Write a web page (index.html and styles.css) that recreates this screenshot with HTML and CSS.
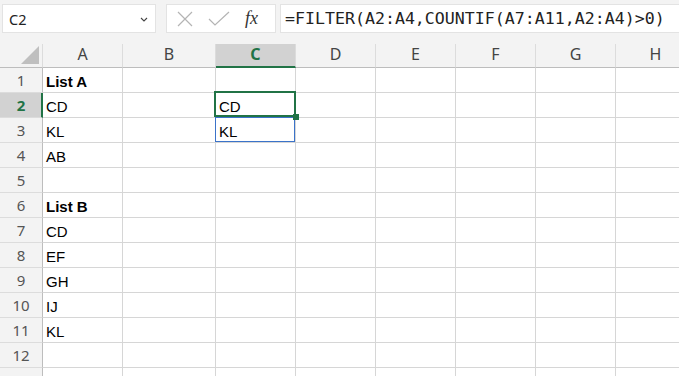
FILE: index.html
```html
<!DOCTYPE html>
<html lang="en">
<head>
    <meta charset="UTF-8">
    <title>FILTER COUNTIF</title>
    <link rel="stylesheet" href="styles.css">
</head>
<body>
    <div class="topbar">
        <div class="namebox">
            <span>C2</span>
            <svg class="chev" width="8" height="5" viewBox="0 0 8 5"><path d="M1 1 L4 4 L7 1" fill="none" stroke="#444" stroke-width="1.1"/></svg>
        </div>
        <div class="fbtns">
            <svg width="18" height="18" viewBox="0 0 18 18"><path d="M2 2 L16 16 M16 2 L2 16" stroke="#b4b4b4" stroke-width="1.2" fill="none"/></svg>
            <svg width="22" height="16" viewBox="0 0 22 16"><path d="M1 8 L7 14 L21 1" stroke="#b4b4b4" stroke-width="1.2" fill="none"/></svg>
            <span class="fx">fx</span>
        </div>
        <div class="fbar">=FILTER(A2:A4,COUNTIF(A7:A11,A2:A4)&gt;0)</div>
    </div>

    <div class="sheet">
        <div class="row hdr">
            <div class="corner"><span class="tri"></span></div>
            <div class="ch w80">A</div><div class="ch w93">B</div><div class="ch w80 sel">C</div><div class="ch w80">D</div>
            <div class="ch w80">E</div><div class="ch w80">F</div><div class="ch w80">G</div><div class="ch w80">H</div>
        </div>
        <div class="row">
            <div class="rh">1</div><div class="c w80 b">List A</div><div class="c w93"></div><div class="c w80"></div><div class="c w80"></div>
            <div class="c w80"></div><div class="c w80"></div><div class="c w80"></div><div class="c w80"></div>
        </div>
        <div class="row">
            <div class="rh sel">2</div><div class="c w80">CD</div><div class="c w93"></div><div class="c w80 active">CD<span class="handle"></span></div><div class="c w80"></div>
            <div class="c w80"></div><div class="c w80"></div><div class="c w80"></div><div class="c w80"></div>
        </div>
        <div class="row">
            <div class="rh">3</div><div class="c w80">KL</div><div class="c w93"></div><div class="c w80 spill">KL</div><div class="c w80"></div>
            <div class="c w80"></div><div class="c w80"></div><div class="c w80"></div><div class="c w80"></div>
        </div>
        <div class="row">
            <div class="rh">4</div><div class="c w80">AB</div><div class="c w93"></div><div class="c w80"></div><div class="c w80"></div>
            <div class="c w80"></div><div class="c w80"></div><div class="c w80"></div><div class="c w80"></div>
        </div>
        <div class="row">
            <div class="rh">5</div><div class="c w80"></div><div class="c w93"></div><div class="c w80"></div><div class="c w80"></div>
            <div class="c w80"></div><div class="c w80"></div><div class="c w80"></div><div class="c w80"></div>
        </div>
        <div class="row">
            <div class="rh">6</div><div class="c w80 b">List B</div><div class="c w93"></div><div class="c w80"></div><div class="c w80"></div>
            <div class="c w80"></div><div class="c w80"></div><div class="c w80"></div><div class="c w80"></div>
        </div>
        <div class="row">
            <div class="rh">7</div><div class="c w80">CD</div><div class="c w93"></div><div class="c w80"></div><div class="c w80"></div>
            <div class="c w80"></div><div class="c w80"></div><div class="c w80"></div><div class="c w80"></div>
        </div>
        <div class="row">
            <div class="rh">8</div><div class="c w80">EF</div><div class="c w93"></div><div class="c w80"></div><div class="c w80"></div>
            <div class="c w80"></div><div class="c w80"></div><div class="c w80"></div><div class="c w80"></div>
        </div>
        <div class="row">
            <div class="rh">9</div><div class="c w80">GH</div><div class="c w93"></div><div class="c w80"></div><div class="c w80"></div>
            <div class="c w80"></div><div class="c w80"></div><div class="c w80"></div><div class="c w80"></div>
        </div>
        <div class="row">
            <div class="rh">10</div><div class="c w80">IJ</div><div class="c w93"></div><div class="c w80"></div><div class="c w80"></div>
            <div class="c w80"></div><div class="c w80"></div><div class="c w80"></div><div class="c w80"></div>
        </div>
        <div class="row">
            <div class="rh">11</div><div class="c w80">KL</div><div class="c w93"></div><div class="c w80"></div><div class="c w80"></div>
            <div class="c w80"></div><div class="c w80"></div><div class="c w80"></div><div class="c w80"></div>
        </div>
        <div class="row">
            <div class="rh">12</div><div class="c w80"></div><div class="c w93"></div><div class="c w80"></div><div class="c w80"></div>
            <div class="c w80"></div><div class="c w80"></div><div class="c w80"></div><div class="c w80"></div>
        </div>
        <div class="row">
            <div class="rh">13</div><div class="c w80"></div><div class="c w93"></div><div class="c w80"></div><div class="c w80"></div>
            <div class="c w80"></div><div class="c w80"></div><div class="c w80"></div><div class="c w80"></div>
        </div>
    </div>
</body>
</html>
```

FILE: styles.css
```css
* {
    box-sizing: border-box;
}
body {
    margin: 0;
    background: #fff;
    overflow: hidden;
    width: 679px;
    height: 376px;
    font-family: "Liberation Sans", Arial, sans-serif;
}

/* formula bar */
.topbar {
    display: flex;
    height: 44px;
    padding: 4px 0 0 2px;
    background: #f3f3f3;
}
.namebox {
    display: flex;
    align-items: center;
    justify-content: space-between;
    width: 154px;
    height: 29px;
    padding: 0 7px 0 6px;
    background: #fff;
    border: 1px solid #e3e3e3;
    font-family: "Noto Sans", sans-serif;
    font-size: 14.5px;
    color: #222;
}
.chev {
    margin-top: 1px;
}
.fbtns {
    display: flex;
    align-items: center;
    width: 110px;
    height: 29px;
    margin-left: 10px;
    padding-left: 9px;
    gap: 14px;
    background: #fff;
    border: 1px solid #e3e3e3;
}
.fx {
    margin-left: 1px;
    font-family: "Liberation Serif", serif;
    font-style: italic;
    font-size: 18px;
    color: #333;
}
.fbar {
    flex: 1;
    height: 29px;
    margin-left: 4px;
    padding-left: 4px;
    background: #fff;
    border: 1px solid #e3e3e3;
    border-right: none;
    font-family: "DejaVu Sans Mono", monospace;
    font-size: 16.6px;
    line-height: 27px;
    color: #222;
    white-space: nowrap;
}

/* grid */
.row {
    display: flex;
}
.w80 { width: 80px; flex: none; }
.w93 { width: 93px; flex: none; }

.hdr {
    height: 24px;
    background: #f3f3f3;
}
.corner {
    position: relative;
    width: 43px;
    flex: none;
    border-right: 1px solid #dcdcdc;
    border-bottom: 1px solid #bdbdbd;
}
.tri {
    position: absolute;
    left: 21px;
    top: 2px;
    width: 0;
    height: 0;
    border-left: 18px solid transparent;
    border-bottom: 18px solid #bfbfbf;
}
.ch {
    height: 24px;
    border-right: 1px solid #dcdcdc;
    border-bottom: 1px solid #bdbdbd;
    text-align: center;
    font-family: "Noto Sans", sans-serif;
    font-size: 16px;
    line-height: 21px;
    color: #444;
}
.ch.sel {
    background: #d2d2d2;
    border-bottom: 2px solid #217346;
    color: #217346;
    font-weight: bold;
}

.rh {
    width: 43px;
    height: 25px;
    flex: none;
    padding-top: 1px;
    background: #f3f3f3;
    border-right: 1px solid #bdbdbd;
    border-bottom: 1px solid #dcdcdc;
    text-align: center;
    font-family: "Noto Sans", sans-serif;
    font-size: 15px;
    line-height: 23px;
    color: #555;
}
.rh.sel {
    background: #d2d2d2;
    border-right: 2px solid #217346;
    padding-left: 1px;
    color: #217346;
    font-weight: bold;
}

.c {
    position: relative;
    height: 25px;
    padding: 2px 0 0 3px;
    border-right: 1px solid #d6d6d6;
    border-bottom: 1px solid #d6d6d6;
    font-size: 15px;
    line-height: 24px;
    color: #000;
    white-space: nowrap;
}
.c.b {
    font-weight: bold;
}
.c.active::after {
    content: "";
    position: absolute;
    top: -2px;
    left: -2px;
    right: -1px;
    bottom: 0;
    border: 2px solid #217346;
    z-index: 2;
}
.handle {
    position: absolute;
    right: -4px;
    bottom: -3px;
    width: 6px;
    height: 6px;
    background: #217346;
    z-index: 3;
}
.c.spill::after {
    content: "";
    position: absolute;
    top: -1px;
    left: -1px;
    right: 0;
    bottom: 0;
    border: 1px solid #3b73c9;
    z-index: 1;
}
```
